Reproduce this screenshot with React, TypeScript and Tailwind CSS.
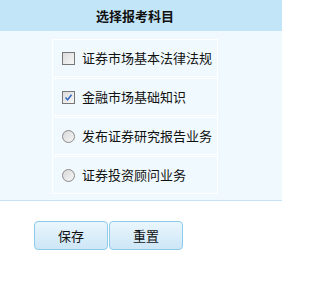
import React from "react"

const subjects = [
  { name: "证券市场基本法律法规", kind: "checkbox", checked: false },
  { name: "金融市场基础知识", kind: "checkbox", checked: true },
  { name: "发布证券研究报告业务", kind: "radio", checked: false },
  { name: "证券投资顾问业务", kind: "radio", checked: false },
]

function Box({ kind, checked }: { kind: string; checked: boolean }) {
  if (kind === "radio") {
    return (
      <span className="block h-[13px] w-[13px] shrink-0 rounded-full border border-[#8a8a8a] bg-gradient-to-br from-[#d8d8d8] to-[#f6f6f6]" />
    )
  }
  return (
    <span className="flex h-[13px] w-[13px] shrink-0 items-center justify-center border border-[#777] bg-gradient-to-br from-[#dcdcdc] to-[#f7f7f7]">
      {checked && (
        <svg width="9" height="9" viewBox="0 0 9 9">
          <path d="M1.5 4.5 L3.6 6.8 L7.6 1.8" fill="none" stroke="#3a6fc4" strokeWidth="1.6" />
        </svg>
      )}
    </span>
  )
}

export default function App() {
  return (
    <div className="h-[289px] w-[282px] bg-white font-['Noto_Sans_CJK_SC',sans-serif] text-[13px] text-[#111]">
      <div className="flex h-[31px] items-center bg-[#c2e5f7]">
        <div className="ml-[52px] w-[166px] text-center font-bold">选择报考科目</div>
      </div>

      <div className="border-b border-[#c4e2f5] bg-[#f0f9fe] pt-[8px] pb-[6px]">
        <div className="ml-[52px] flex w-[166px] flex-col gap-[1px]">
          {subjects.map((s) => (
            <div key={s.name} className="flex h-[38px] items-center gap-[7px] border border-white pl-[9px]">
              <Box kind={s.kind} checked={s.checked} />
              <span>{s.name}</span>
            </div>
          ))}
        </div>
      </div>

      <div className="ml-[34px] mt-[20px] flex gap-[1px]">
        <button className="h-[29px] w-[74px] rounded-[4px] border border-[#8ccbea] bg-gradient-to-b from-[#eaf6fd] to-[#cde6f7] text-[13px]">
          保存
        </button>
        <button className="h-[29px] w-[74px] rounded-[4px] border border-[#8ccbea] bg-gradient-to-b from-[#eaf6fd] to-[#cde6f7] text-[13px]">
          重置
        </button>
      </div>
    </div>
  )
}
